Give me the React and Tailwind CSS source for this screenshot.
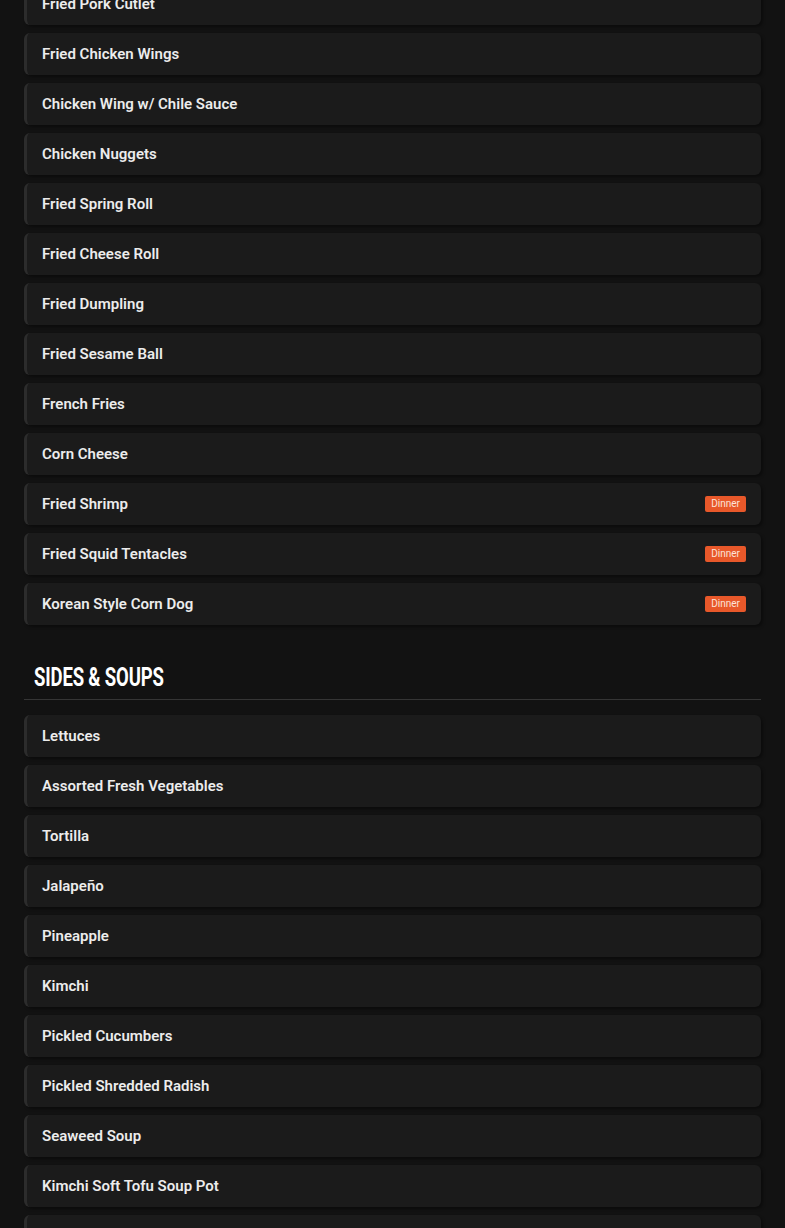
import React from 'react';

const appetizers = [
  { name: 'Fried Pork Cutlet' },
  { name: 'Fried Chicken Wings' },
  { name: 'Chicken Wing w/ Chile Sauce' },
  { name: 'Chicken Nuggets' },
  { name: 'Fried Spring Roll' },
  { name: 'Fried Cheese Roll' },
  { name: 'Fried Dumpling' },
  { name: 'Fried Sesame Ball' },
  { name: 'French Fries' },
  { name: 'Corn Cheese' },
  { name: 'Fried Shrimp', dinner: true },
  { name: 'Fried Squid Tentacles', dinner: true },
  { name: 'Korean Style Corn Dog', dinner: true },
];

const sides = [
  { name: 'Lettuces' },
  { name: 'Assorted Fresh Vegetables' },
  { name: 'Tortilla' },
  { name: 'Jalapeño' },
  { name: 'Pineapple' },
  { name: 'Kimchi' },
  { name: 'Pickled Cucumbers' },
  { name: 'Pickled Shredded Radish' },
  { name: 'Seaweed Soup' },
  { name: 'Kimchi Soft Tofu Soup Pot' },
  { name: 'Steamed Egg' },
];

const MenuItem = ({ item }) => (
  <div className="h-[42px] flex items-center justify-between bg-[#1b1b1b] border-l-[3px] border-[#2c2c2c] rounded-md pl-[15px] pr-[15px] shadow-[2px_2px_3px_rgba(0,0,0,0.35)]">
    <span className="text-[15px] font-semibold text-[#ececec]">{item.name}</span>
    {item.dinner && (
      <span className="bg-[#e8582a] text-[#fbe3da] text-[10px] leading-none px-[6px] py-[3px] rounded-[2px]">Dinner</span>
    )}
  </div>
);

export default function App() {
  return (
    <div className="min-h-[1228px] bg-[#121212] overflow-hidden font-['Roboto','Liberation_Sans',sans-serif]">
      <div className="mx-[24px] -mt-[17px] flex flex-col gap-[8px]">
        {appetizers.map((item) => (
          <MenuItem key={item.name} item={item} />
        ))}
      </div>

      <div className="mx-[24px] mt-[40px] border-b border-[#353535] pb-[8px] pl-[10px]">
        <h2 className="text-[25px] leading-[26px] font-bold text-white uppercase tracking-[-0.2px] scale-x-[0.74] origin-left font-['Roboto','Liberation_Sans',sans-serif]">
          Sides &amp; Soups
        </h2>
      </div>

      <div className="mx-[24px] mt-[15px] flex flex-col gap-[8px]">
        {sides.map((item) => (
          <MenuItem key={item.name} item={item} />
        ))}
      </div>
    </div>
  );
}
